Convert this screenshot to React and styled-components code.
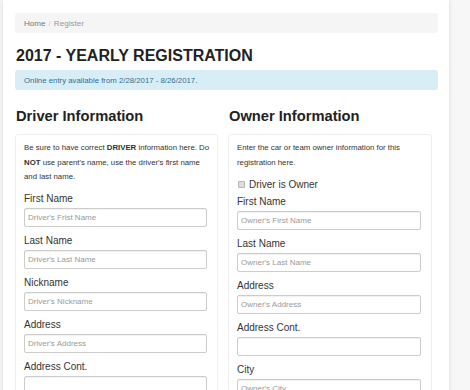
import React from "react";
import styled, { createGlobalStyle } from "styled-components";

const Global = createGlobalStyle`
  html, body { margin: 0; padding: 0; }
  body {
    background: #f7f7f7;
    font-family: "Liberation Sans", Arial, sans-serif;
    color: #333;
    overflow: hidden;
  }
`;

const Page = styled.div`
  width: 446px;
  margin-left: 3px;
  min-height: 390px;
  background: #fff;
  box-shadow: 0 0 5px rgba(0, 0, 0, 0.12);
  padding: 13px 11px 0 12px;
  box-sizing: border-box;
`;

const Breadcrumb = styled.div`
  height: 20px;
  background: #f5f5f5;
  border-radius: 3px;
  display: flex;
  align-items: center;
  padding-left: 9px;
  font-size: 8.1px;
  color: #999;
  gap: 3px;
`;

const Crumb = styled.span`
  color: ${(p) => (p.$active ? "#999" : "#777")};
`;

const Sep = styled.span`
  color: #ccc;
`;

const Title = styled.h1`
  margin: 12px 0 0 1px;
  font-size: 16px;
  line-height: 22px;
  font-weight: bold;
  color: #222;
`;

const Alert = styled.div`
  margin-top: 3px;
  height: 20px;
  background: #d9edf7;
  border-radius: 3px;
  display: flex;
  align-items: center;
  padding-left: 9px;
  font-size: 7.8px;
  color: #31708f;
`;

const Columns = styled.div`
  display: grid;
  grid-template-columns: 203px 204px;
  column-gap: 10px;
  margin-top: 15px;
`;

const Column = styled.div`
  display: flex;
  flex-direction: column;
`;

const SectionTitle = styled.h2`
  margin: 0 0 0 1px;
  font-size: 14.7px;
  line-height: 22px;
  font-weight: bold;
  color: #222;
`;

const Panel = styled.div`
  margin-top: 7px;
  border: 1px solid #eee;
  border-radius: 3px;
  padding: 6px 10px 0 8px;
`;

const Intro = styled.p`
  margin: 0 -5px 7.5px 0;
  font-size: 7.8px;
  line-height: 14.5px;
  color: #333;
`;

const CheckRow = styled.label`
  display: flex;
  align-items: center;
  gap: 4px;
  height: 14px;
  margin-bottom: 3px;
  font-size: 10px;
  color: #333;
`;

const Box = styled.span`
  width: 5px;
  height: 5px;
  border: 1px solid #b5b5b5;
  background: #ddd;
  border-radius: 1px;
  margin-left: 1px;
`;

const Field = styled.div`
  display: flex;
  flex-direction: column;
  margin-bottom: 7px;
`;

const Label = styled.label`
  font-size: 10px;
  line-height: 14px;
  margin-bottom: 2px;
  color: #333;
`;

const Input = styled.div`
  height: 19px;
  box-sizing: border-box;
  border: 1px solid #ccc;
  border-radius: 2px;
  box-shadow: inset 0 1px 1px rgba(0, 0, 0, 0.06);
  display: flex;
  align-items: center;
  padding-left: 3px;
  font-size: 8px;
  color: #999;
`;

const driverFields = [
  ["First Name", "Driver's Frist Name"],
  ["Last Name", "Driver's Last Name"],
  ["Nickname", "Driver's Nickname"],
  ["Address", "Driver's Address"],
  ["Address Cont.", ""],
];

const ownerFields = [
  ["First Name", "Owner's First Name"],
  ["Last Name", "Owner's Last Name"],
  ["Address", "Owner's Address"],
  ["Address Cont.", ""],
  ["City", "Owner's City"],
];

const Fields = ({ items }) =>
  items.map(([label, ph]) => (
    <Field key={label}>
      <Label>{label}</Label>
      <Input>{ph}</Input>
    </Field>
  ));

export default function App() {
  return (
    <>
      <Global />
      <Page>
        <Breadcrumb>
          <Crumb>Home</Crumb>
          <Sep>/</Sep>
          <Crumb $active>Register</Crumb>
        </Breadcrumb>
        <Title>2017 - YEARLY REGISTRATION</Title>
        <Alert>Online entry available from 2/28/2017 - 8/26/2017.</Alert>
        <Columns>
          <Column>
            <SectionTitle>Driver Information</SectionTitle>
            <Panel>
              <Intro>
                Be sure to have correct <b>DRIVER</b> information here. Do{" "}
                <b>NOT</b> use parent's name, use the driver's first name and
                last name.
              </Intro>
              <Fields items={driverFields} />
            </Panel>
          </Column>
          <Column>
            <SectionTitle>Owner Information</SectionTitle>
            <Panel>
              <Intro>
                Enter the car or team owner information for this registration
                here.
              </Intro>
              <CheckRow>
                <Box />
                Driver is Owner
              </CheckRow>
              <Fields items={ownerFields} />
            </Panel>
          </Column>
        </Columns>
      </Page>
    </>
  );
}
